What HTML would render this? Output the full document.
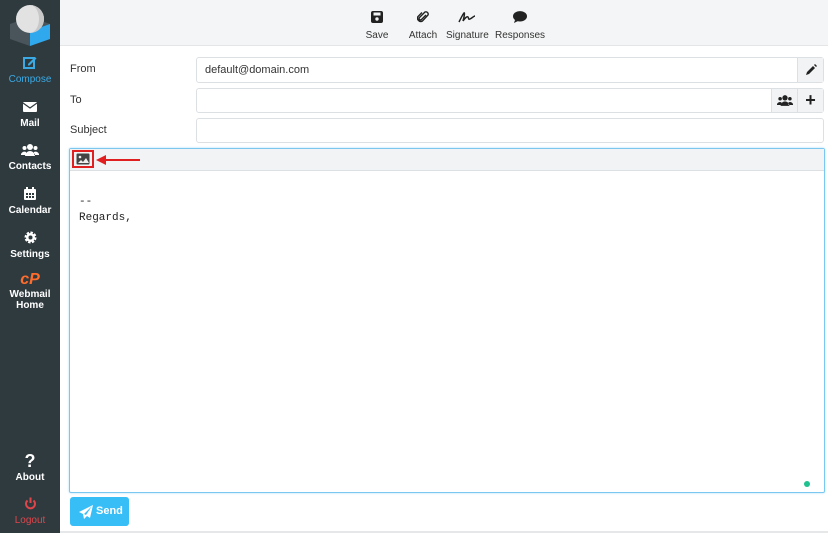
<!DOCTYPE html>
<html><head><meta charset="utf-8"><style>
*{box-sizing:border-box;margin:0;padding:0}
body{width:832px;height:533px;background:#fff;font-family:"Liberation Sans",sans-serif;position:relative;overflow:hidden}
.side{position:absolute;left:0;top:0;width:60px;height:533px;background:#2f3a3f}
.nav{position:absolute;left:0;width:60px;text-align:center;color:#fff;font-size:10px;font-weight:bold;line-height:11px}
.nav svg{display:block;margin:0 auto 5px}
.top{position:absolute;left:60px;top:0;width:768px;height:46px;background:#f4f5f6;border-bottom:1px solid #e3e5e7}
.tb{position:absolute;top:11px;text-align:center;font-size:10px;color:#333}
.tb svg{display:block;margin:0 auto 7px}
.lbl{position:absolute;left:70px;font-size:11px;color:#333}
.inp{position:absolute;left:196px;width:628px;border:1px solid #dde0e3;border-radius:3px;background:#fff;font-size:11px;color:#333;padding-left:8px}
.btn{position:absolute;top:0;height:100%;width:26px;background:#f2f3f4;border-left:1px solid #dde0e3}
</style></head><body>
<div class="side"></div>
<svg style="position:absolute;left:8px;top:4px" width="44" height="44">
<polygon points="2,20 22,13 42,20 42,35 22,42 2,35" fill="#4a555b"/>
<polygon points="22,27 42,20 42,35 22,42" fill="#2fa8ee"/>
<circle cx="22" cy="15" r="14" fill="#e2e2e2"/><path d="M22 1a14 14 0 0 1 0 28a9 14 0 0 0 0-28z" fill="#c8c8c8"/>
</svg>
<div class="nav" style="top:56px;color:#3aa9e4;font-weight:normal"><svg width="14" height="13" viewBox="0 0 14 13"><rect x="1" y="2" width="10" height="10" fill="none" stroke="#3aa9e4" stroke-width="2"/><path d="M5 8l7-7 1.5 1.5-7 7H5z" fill="#3aa9e4"/></svg>Compose</div>
<div class="nav" style="top:101px"><svg width="14" height="12" viewBox="0 0 14 12"><rect x="0" y="1" width="14" height="10" rx="1" fill="#fff"/><path d="M0 2l7 5 7-5" fill="none" stroke="#2f3a3f" stroke-width="1.2"/></svg>Mail</div>
<div class="nav" style="top:144px"><svg width="18" height="12" viewBox="0 0 18 12"><circle cx="9" cy="3" r="3" fill="#fff"/><circle cx="3.5" cy="4" r="2" fill="#fff"/><circle cx="14.5" cy="4" r="2" fill="#fff"/><path d="M4 12a5 5 0 0 1 10 0zM0 11a3.5 3 0 0 1 5-3v3zM18 11a3.5 3 0 0 0-5-3v3z" fill="#fff"/></svg>Contacts</div>
<div class="nav" style="top:187px"><svg width="12" height="13" viewBox="0 0 12 13"><rect x="0" y="2" width="12" height="11" rx="1" fill="#fff"/><rect x="2" y="0" width="2" height="3" fill="#fff"/><rect x="8" y="0" width="2" height="3" fill="#fff"/><g fill="#2f3a3f"><rect x="2" y="6" width="2" height="2"/><rect x="5" y="6" width="2" height="2"/><rect x="8" y="6" width="2" height="2"/><rect x="2" y="9" width="2" height="2"/><rect x="5" y="9" width="2" height="2"/><rect x="8" y="9" width="2" height="2"/></g></svg>Calendar</div>
<div class="nav" style="top:231px"><svg width="13" height="13" viewBox="0 0 13 13"><circle cx="6.5" cy="6.5" r="4.5" fill="#fff" stroke="#fff" stroke-width="3" stroke-dasharray="2.2 1.3"/><circle cx="6.5" cy="6.5" r="2" fill="#2f3a3f"/></svg>Settings</div>
<div class="nav" style="top:272px"><div style="color:#ff6c2c;font-size:16px;font-style:italic;font-weight:bold;line-height:15px;margin-bottom:2px">cP</div>Webmail<br>Home</div>
<div class="nav" style="top:452px"><div style="font-size:18px;line-height:18px;margin-bottom:2px">?</div>About</div>
<div class="nav" style="top:497px;color:#e0454a;font-weight:normal"><svg width="13" height="13" viewBox="0 0 13 13"><path d="M3.5 3.5a4.5 4.5 0 1 0 6 0" fill="none" stroke="#e0454a" stroke-width="2"/><line x1="6.5" y1="0.5" x2="6.5" y2="6" stroke="#e0454a" stroke-width="2"/></svg>Logout</div>

<div class="top"></div>
<div class="tb" style="left:362px;width:30px"><svg width="12" height="12" viewBox="0 0 12 12"><rect width="12" height="12" rx="2" fill="#222"/><rect x="2.5" y="1.5" width="7" height="3" fill="#f4f5f6"/><circle cx="6" cy="8" r="1.7" fill="#f4f5f6"/></svg>Save</div>
<div class="tb" style="left:406px;width:34px"><svg width="12" height="12" viewBox="0 0 12 12"><path d="M9 4L4.5 8.5a1.3 1.3 0 0 1-2-2L8 1a2.3 2.3 0 0 1 3 3L5.5 10a3.3 3.3 0 0 1-4.5-4.5L5 1.5" fill="none" stroke="#222" stroke-width="1.4"/></svg>Attach</div>
<div class="tb" style="left:446px;width:42px"><svg width="18" height="12" viewBox="0 0 18 12"><path d="M1 11C3 7 5 3 6 2S6 7 5 10c2-3 4-5 5-4s0 3 2 2 4-3 5-3" fill="none" stroke="#222" stroke-width="1.5"/></svg>Signature</div>
<div class="tb" style="left:494px;width:52px"><svg width="14" height="12" viewBox="0 0 14 12"><ellipse cx="7" cy="5.3" rx="7" ry="5.2" fill="#222"/><path d="M2 9l-1 3 4-2z" fill="#222"/></svg>Responses</div>

<div class="lbl" style="top:63px">From</div>
<div class="lbl" style="top:94px">To</div>
<div class="lbl" style="top:124px">Subject</div>
<div class="inp" style="top:57px;height:26px;line-height:24px">default@domain.com<div class="btn" style="right:0"><svg style="margin:6px 7px" width="12" height="12" viewBox="0 0 12 12"><path d="M1 11l1-3 6-6 2 2-6 6zM9 1l1-1 2 2-1 1z" fill="#222"/></svg></div></div>
<div class="inp" style="top:88px;height:25px"><div class="btn" style="right:26px"><svg style="margin:6px 5px" width="16" height="11" viewBox="0 0 18 12"><circle cx="9" cy="3" r="3" fill="#222"/><circle cx="3.5" cy="4" r="2" fill="#222"/><circle cx="14.5" cy="4" r="2" fill="#222"/><path d="M4 12a5 5 0 0 1 10 0zM0 11a3.5 3 0 0 1 5-3v3zM18 11a3.5 3 0 0 0-5-3v3z" fill="#222"/></svg></div><div class="btn" style="right:0;font-size:18px;font-weight:bold;text-align:center;line-height:22px;color:#222">+</div></div>
<div class="inp" style="top:118px;height:25px"></div>

<div style="position:absolute;left:69px;top:148px;width:756px;height:345px;border:1px solid #7cc7f0;box-shadow:0 0 2px #a9dcf7;border-radius:2px">
<div style="height:22px;background:#f2f3f4;border-bottom:1px solid #dde0e3"></div>
<div style="position:absolute;left:9px;top:45px;font-family:'Liberation Mono',monospace;font-size:11px;line-height:16px;color:#222">--<br>Regards,</div>
<div style="position:absolute;left:734px;top:332px;width:6px;height:6px;border-radius:50%;background:#1fc18e"></div>
</div>
<div style="position:absolute;left:72px;top:150px;width:22px;height:18px;border:2px solid #e02020"></div>
<svg style="position:absolute;left:76px;top:153px" width="14" height="12" viewBox="0 0 14 12"><rect x="0.5" y="0.5" width="13" height="11" rx="1" fill="#444"/><circle cx="4" cy="4" r="1.3" fill="#eee"/><path d="M2 10l3-3 2 2 3-4 3 5z" fill="#eee"/></svg>
<div style="position:absolute;left:104px;top:159px;width:36px;height:2px;background:#e02020"></div>
<svg style="position:absolute;left:96px;top:155px" width="10" height="10"><polygon points="0,5 10,0 10,10" fill="#e02020"/></svg>

<div style="position:absolute;left:70px;top:497px;width:59px;height:29px;background:#37bef7;border-radius:3px;color:#fff;font-size:11px;font-weight:bold;line-height:29px;padding-left:26px">Send
<svg style="position:absolute;left:9px;top:8px" width="14" height="14" viewBox="0 0 14 14"><path d="M14 0L0 7l4 2 1 5 3-3 3 2zM5 9l8-8-6 9z" fill="#fff"/></svg></div>
<div style="position:absolute;left:60px;top:531px;width:768px;height:2px;background:#e6e7e8"></div>
</body></html>
